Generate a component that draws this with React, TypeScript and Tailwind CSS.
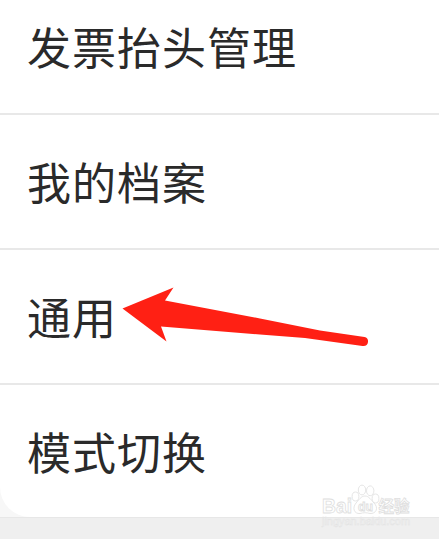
interface MenuRowProps {
  label: string;
}

const MENU_LABELS = ['发票抬头管理', '我的档案', '通用', '模式切换'];

const MenuRow = ({ label }: MenuRowProps) => {
  return (
    <li className="flex h-[135px] shrink-0 items-center border-b-2 border-[#e8e8e8] pb-px pl-[27px] last:border-transparent">
      <span className="text-[44px] leading-[64px] tracking-[1px] whitespace-nowrap text-[#2a2a2a]">
        {label}
      </span>
    </li>
  );
};

const PointerArrow = () => {
  return (
    <svg
      className="absolute top-[280px] left-[115px]"
      width="260"
      height="75"
      viewBox="115 280 260 75"
      fill="#ff2014"
    >
      <path d="M122.5 308.5 L173.5 287.5 L165 300.5 L260 318.5 L320 330.5 L364.5 337 Q368.5 338 368 342 Q367.5 346.5 362.5 346 L305 338 L260 334.5 L161 326.5 L166.5 341.5 Z" />
    </svg>
  );
};

const Watermark = () => {
  return (
    <svg
      className="absolute top-[475px] left-[310px]"
      width="129"
      height="64"
      fill="#ffffff"
      stroke="#dedede"
      strokeWidth="0.8"
    >
      <g fontFamily="Liberation Sans, sans-serif" fontWeight="bold">
        <text
          x="12"
          y="37.5"
          fontSize="20"
          textLength="30"
          lengthAdjust="spacingAndGlyphs"
        >
          Bai
        </text>
        <ellipse cx="45.5" cy="21.5" rx="3.4" ry="4.5" />
        <ellipse cx="52" cy="15" rx="3.7" ry="4.9" />
        <ellipse cx="60.2" cy="15.8" rx="3.7" ry="4.9" />
        <ellipse cx="65.5" cy="23.5" rx="3.4" ry="4.5" />
        <path d="M55 21 C59 21 61 25 64 28 C69 33 66 39 60 38.5 C56 37.5 54 37.5 50 38.5 C44 39 42 33 46 28 C49 25 51 21 55 21 Z" />
        <text
          x="48"
          y="36"
          fontSize="12"
          textLength="15"
          lengthAdjust="spacingAndGlyphs"
        >
          du
        </text>
      </g>
      <text
        x="68.5"
        y="36.5"
        fontFamily="Noto Sans CJK SC, sans-serif"
        fontSize="15.5"
        fontWeight="bold"
      >
        经验
      </text>
      <text
        x="12"
        y="49.5"
        fontFamily="Liberation Sans, sans-serif"
        fontSize="10"
        textLength="88"
        lengthAdjust="spacingAndGlyphs"
        fill="#f4f4f4"
        stroke="#e2e2e2"
        strokeWidth="0.4"
      >
        jingyan.baidu.com
      </text>
    </svg>
  );
};

export default function App() {
  return (
    <main className="relative h-[539px] w-full overflow-hidden bg-[#efefef] font-['Noto_Sans_CJK_SC',sans-serif]">
      {/* Settings list */}
      <div className="border-b border-[#e7e7e7] bg-[#f7f7f7]">
        <div className="flex h-[517px] flex-col justify-end overflow-hidden rounded-bl-[30px] bg-white">
          <ul className="flex h-[537px] shrink-0 flex-col">
            {MENU_LABELS.map((label) => (
              <MenuRow key={label} label={label} />
            ))}
          </ul>
        </div>
      </div>

      <PointerArrow />
      <Watermark />
    </main>
  );
}
